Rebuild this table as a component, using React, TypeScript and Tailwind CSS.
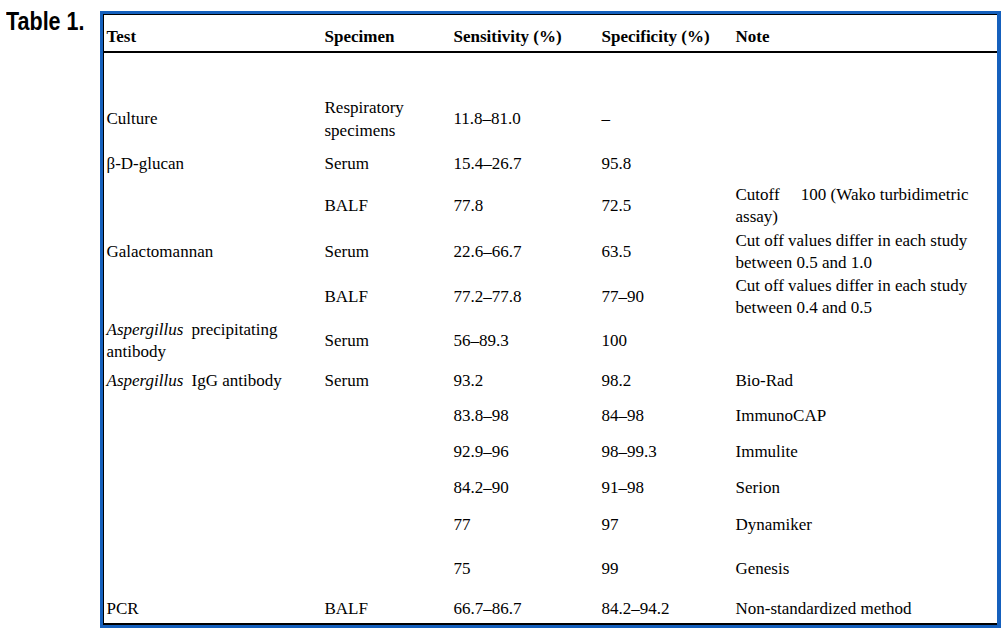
import type { ReactNode } from "react";

type Row = {
  h: string;
  test?: ReactNode;
  specimen?: string;
  sensitivity: string;
  specificity: string;
  note?: string;
};

const rows: Row[] = [
  {
    h: "h-[45px]",
    test: "Culture",
    specimen: "Respiratory specimens",
    sensitivity: "11.8–81.0",
    specificity: "–",
  },
  {
    h: "h-[45px]",
    test: "β-D-glucan",
    specimen: "Serum",
    sensitivity: "15.4–26.7",
    specificity: "95.8",
  },
  {
    h: "h-[38px]",
    specimen: "BALF",
    sensitivity: "77.8",
    specificity: "72.5",
    note: "Cutoff\u00a0\u00a0\u00a0\u00a0\u00a0100 (Wako turbidimetric assay)",
  },
  {
    h: "h-[54px]",
    test: "Galactomannan",
    specimen: "Serum",
    sensitivity: "22.6–66.7",
    specificity: "63.5",
    note: "Cut off values differ in each study between 0.5 and 1.0",
  },
  {
    h: "h-[36px]",
    specimen: "BALF",
    sensitivity: "77.2–77.8",
    specificity: "77–90",
    note: "Cut off values differ in each study between 0.4 and 0.5",
  },
  {
    h: "h-[52px]",
    test: (
      <>
        <i className="mr-[4px]">Aspergillus</i> precipitating antibody
      </>
    ),
    specimen: "Serum",
    sensitivity: "56–89.3",
    specificity: "100",
  },
  {
    h: "h-[29px]",
    test: (
      <>
        <i className="mr-[4px]">Aspergillus</i> IgG antibody
      </>
    ),
    specimen: "Serum",
    sensitivity: "93.2",
    specificity: "98.2",
    note: "Bio-Rad",
  },
  { h: "h-[40px]", sensitivity: "83.8–98", specificity: "84–98", note: "ImmunoCAP" },
  { h: "h-[32px]", sensitivity: "92.9–96", specificity: "98–99.3", note: "Immulite" },
  { h: "h-[40px]", sensitivity: "84.2–90", specificity: "91–98", note: "Serion" },
  { h: "h-[34px]", sensitivity: "77", specificity: "97", note: "Dynamiker" },
  { h: "h-[54px]", sensitivity: "75", specificity: "99", note: "Genesis" },
  {
    h: "h-[27px]",
    test: "PCR",
    specimen: "BALF",
    sensitivity: "66.7–86.7",
    specificity: "84.2–94.2",
    note: "Non-standardized method",
  },
];

const c1 = "w-[218px] shrink-0 pl-[2.5px]";
const c2 = "w-[129px] shrink-0 pl-[2.5px]";
const c3 = "w-[148px] shrink-0 pl-[2.5px]";
const c4 = "w-[134px] shrink-0 pl-[2.5px]";
const c5 = "min-w-0 flex-1 pl-[2.5px] pr-[6px]";

export default function App() {
  return (
    <div className="flex h-[634px] w-[1008px] items-start bg-white text-black">
      <div className="w-[100px] pl-[6px] pt-[8px]">
        <h1 className="origin-left scale-x-[0.86] whitespace-nowrap font-['Liberation_Sans','Arial',sans-serif] text-[25px] font-bold leading-[26px]">
          Table 1.
        </h1>
      </div>

      <div className="mt-[11px] w-[901px] border-t-[3px] border-r-4 border-b-[3px] border-l-[3px] border-[#1560bd]">
        <div className="border-t border-b-2 border-l border-black font-['Liberation_Serif','Times_New_Roman',serif] text-[17px] leading-[22.5px]">
          <div className="flex h-[38px] items-start border-b-2 border-black pt-[11px] font-bold">
            <div className={c1}>Test</div>
            <div className={c2}>Specimen</div>
            <div className={c3}>Sensitivity (%)</div>
            <div className={c4}>Specificity (%)</div>
            <div className={c5}>Note</div>
          </div>

          <div className="h-[44px]" />

          {rows.map((r, i) => (
            <div key={i} className={`flex items-center ${r.h}`}>
              <div className={c1}>{r.test}</div>
              <div className={c2}>{r.specimen}</div>
              <div className={c3}>{r.sensitivity}</div>
              <div className={c4}>{r.specificity}</div>
              <div className={c5}>{r.note}</div>
            </div>
          ))}
        </div>
      </div>
    </div>
  );
}
